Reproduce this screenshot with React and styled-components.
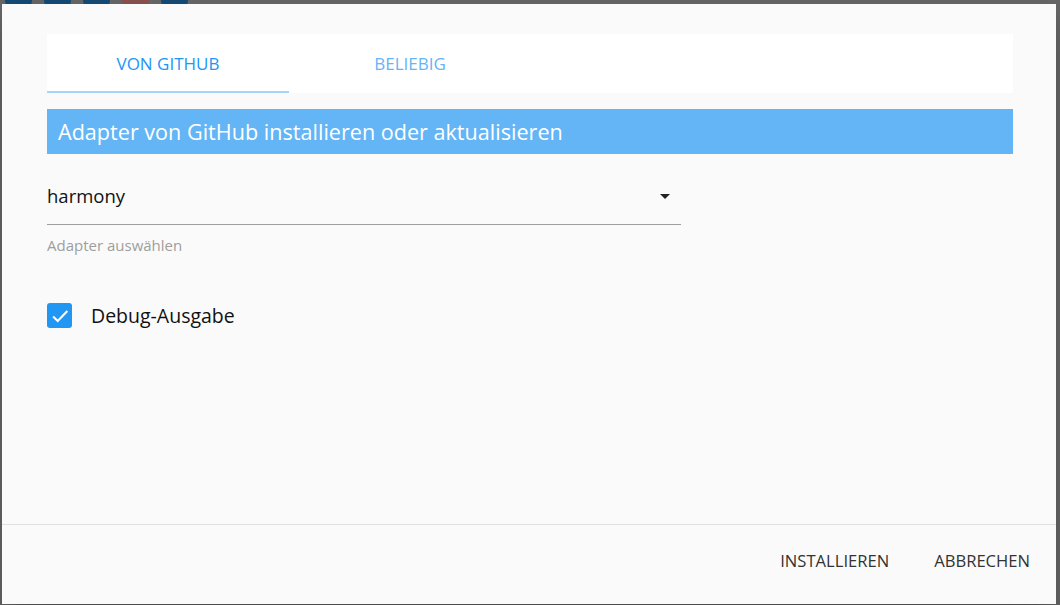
import React from 'react';
import styled, { createGlobalStyle } from 'styled-components';

const GlobalStyle = createGlobalStyle`
  html, body {
    margin: 0;
    padding: 0;
    width: 1060px;
    height: 605px;
    overflow: hidden;
    font-family: 'Open Sans', 'Noto Sans', sans-serif;
  }
`;

const Backdrop = styled.div`
  position: relative;
  width: 1060px;
  height: 605px;
  background: #666666;
  overflow: hidden;
`;

const BackToolbar = styled.div`
  display: flex;
  gap: 12px;
  padding: 0 0 0 5px;
  margin-top: -14px;
`;

const BackButton = styled.div`
  width: 27px;
  height: 27px;
  border-radius: 50%;
  background: ${p => (p.red ? '#8a5050' : '#144a74')};
`;

const Dialog = styled.div`
  position: absolute;
  left: 2px;
  top: 4px;
  width: 1054px;
  height: 600px;
  background: #fafafa;
  display: flex;
  flex-direction: column;
  box-shadow: 0 11px 15px -7px rgba(0,0,0,0.2), 0 24px 38px 3px rgba(0,0,0,0.14);
`;

const Content = styled.div`
  flex: 1;
  padding: 30px 43px 0 45px;
  display: flex;
  flex-direction: column;
`;

const TabBar = styled.div`
  display: flex;
  height: 59px;
  background: #ffffff;
`;

const Tab = styled.div`
  width: 242px;
  display: flex;
  align-items: center;
  justify-content: center;
  font-size: 17px;
  text-transform: uppercase;
  color: ${p => (p.active ? '#2196f3' : '#64b5f6')};
  border-bottom: 2px solid ${p => (p.active ? '#a6d4fa' : 'transparent')};
  box-sizing: border-box;
  padding-top: 2px;
`;

const Header = styled.div`
  margin-top: 16px;
  height: 45px;
  background: #64b5f6;
  color: #ffffff;
  font-size: 21.6px;
  display: flex;
  align-items: center;
  padding-left: 11px;
`;

const SelectField = styled.div`
  width: 634px;
  margin-top: 24px;
`;

const SelectRow = styled.div`
  display: flex;
  align-items: center;
  justify-content: space-between;
  height: 47px;
  border-bottom: 1px solid #9e9e9e;
  box-sizing: border-box;
  padding-bottom: 11px;
  font-size: 18.5px;
  color: #111;
`;

const Arrow = styled.svg`
  width: 24px;
  height: 24px;
  margin-right: 4px;
  fill: #222;
`;

const Helper = styled.div`
  margin-top: 10px;
  font-size: 15px;
  color: #9e9e9e;
`;

const CheckRow = styled.label`
  display: flex;
  align-items: center;
  gap: 19px;
  margin-top: 47px;
  font-size: 19.5px;
  color: #111;
`;

const CheckBox = styled.span`
  width: 25px;
  height: 25px;
  border-radius: 3px;
  background: #2196f3;
  display: flex;
  align-items: center;
  justify-content: center;
`;

const Footer = styled.div`
  height: 80px;
  box-sizing: border-box;
  border-top: 1px solid #e0e0e0;
  display: flex;
  align-items: center;
  justify-content: flex-end;
  gap: 45px;
  padding-right: 26px;
  padding-bottom: 8px;
`;

const FooterButton = styled.button`
  background: none;
  border: none;
  padding: 0;
  font-family: inherit;
  font-size: 16.6px;
  color: #333;
  text-transform: uppercase;
  cursor: pointer;
`;

export default function App() {
  return (
    <>
      <GlobalStyle />
      <Backdrop>
        <BackToolbar>
          <BackButton />
          <BackButton />
          <BackButton />
          <BackButton red />
          <BackButton />
        </BackToolbar>
        <Dialog>
          <Content>
            <TabBar>
              <Tab active>Von GitHub</Tab>
              <Tab>Beliebig</Tab>
            </TabBar>
            <Header>Adapter von GitHub installieren oder aktualisieren</Header>
            <SelectField>
              <SelectRow>
                <span>harmony</span>
                <Arrow viewBox="0 0 24 24"><path d="M7 10l5 5 5-5z" /></Arrow>
              </SelectRow>
              <Helper>Adapter auswählen</Helper>
            </SelectField>
            <CheckRow>
              <CheckBox>
                <svg width="22" height="22" viewBox="0 0 24 24">
                  <path d="M4.5 12.5l5 5L20 6.5" fill="none" stroke="#fff" strokeWidth="2.2" />
                </svg>
              </CheckBox>
              Debug-Ausgabe
            </CheckRow>
          </Content>
          <Footer>
            <FooterButton>Installieren</FooterButton>
            <FooterButton>Abbrechen</FooterButton>
          </Footer>
        </Dialog>
      </Backdrop>
    </>
  );
}
